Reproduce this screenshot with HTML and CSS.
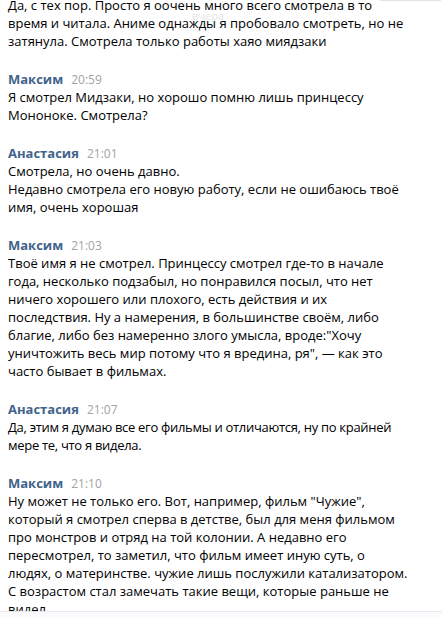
FILE: index.html
```html
<!DOCTYPE html>
<html lang="ru">
<head>
<meta charset="utf-8">
<link rel="stylesheet" href="styles.css">
</head>
<body>
<div class="topline"></div>
<div class="date-float">вчера</div>
<div class="chat">
  <div class="msg">
    <div class="text">Да, с тех пор. Просто я оочень много всего смотрела в то время и читала. Аниме однажды я пробовало смотреть, но не затянула. Смотрела только работы хаяо миядзаки</div>
  </div>
  <div class="msg">
    <div class="head"><span class="name">Максим</span><span class="time">20:59</span></div>
    <div class="text">Я смотрел Мидзаки, но хорошо помню лишь принцессу Мононоке. Смотрела?</div>
  </div>
  <div class="msg">
    <div class="head"><span class="name">Анастасия</span><span class="time">21:01</span></div>
    <div class="text">Смотрела, но очень давно.<br>Недавно смотрела его новую работу, если не ошибаюсь твоё имя, очень хорошая</div>
  </div>
  <div class="msg">
    <div class="head"><span class="name">Максим</span><span class="time">21:03</span></div>
    <div class="text">Твоё имя я не смотрел. Принцессу смотрел где-то в начале года, несколько подзабыл, но понравился посыл, что нет ничего хорошего или плохого, есть действия и их последствия. Ну а намерения, в большинстве своём, либо благие, либо без намеренно злого умысла, вроде:"Хочу уничтожить весь мир потому что я вредина, ря", — как это часто бывает в фильмах.</div>
  </div>
  <div class="msg">
    <div class="head"><span class="name">Анастасия</span><span class="time">21:07</span></div>
    <div class="text text-tight">Да, этим я думаю все его фильмы и отличаются, ну по крайней мере те, что я видела.</div>
  </div>
  <div class="msg">
    <div class="head"><span class="name">Максим</span><span class="time">21:10</span></div>
    <div class="text">Ну может не только его. Вот, например, фильм "Чужие", который я смотрел сперва в детстве, был для меня фильмом про монстров и отряд на той колонии. А недавно его пересмотрел, то заметил, что фильм имеет иную суть, о людях, о материнстве. чужие лишь послужили катализатором. С возрастом стал замечать такие вещи, которые раньше не видел.</div>
  </div>
</div>
<div class="composer"></div>
</body>
</html>
```
FILE: styles.css
```css
html, body {
  margin: 0;
  padding: 0;
  background: #fff;
  overflow: hidden;
  height: 618px;
}
body {
  font-family: "Open Sans", Roboto, "Liberation Sans", sans-serif;
  font-size: 13px;
  line-height: 18px;
  color: #000;
  position: relative;
}
.topline {
  position: absolute;
  top: 0;
  left: 380px;
  width: 61px;
  height: 1px;
  background: #e3e4e8;
  z-index: 2;
}
.date-float {
  position: absolute;
  top: 9px;
  left: 192px;
  font-size: 11px;
  line-height: 14px;
  color: #e6e6e6;
  z-index: 2;
}
.chat {
  margin-top: -4px;
  padding-left: 8px;
  width: 400px;
  display: flex;
  flex-direction: column;
  gap: 20px;
}
.head {
  display: flex;
  align-items: baseline;
  gap: 8px;
  height: 18px;
}
.name {
  font-weight: 700;
  color: #42648b;
}
.time {
  font-size: 12px;
  color: #a3a3a3;
}
.text {
  word-wrap: break-word;
}
.text-tight {
  letter-spacing: -0.3px;
}
.composer {
  position: absolute;
  left: 0;
  right: 0;
  top: 611px;
  height: 7px;
  background: #fafbfc;
  border-top: 1px solid #e7e8ec;
  z-index: 3;
}
```
